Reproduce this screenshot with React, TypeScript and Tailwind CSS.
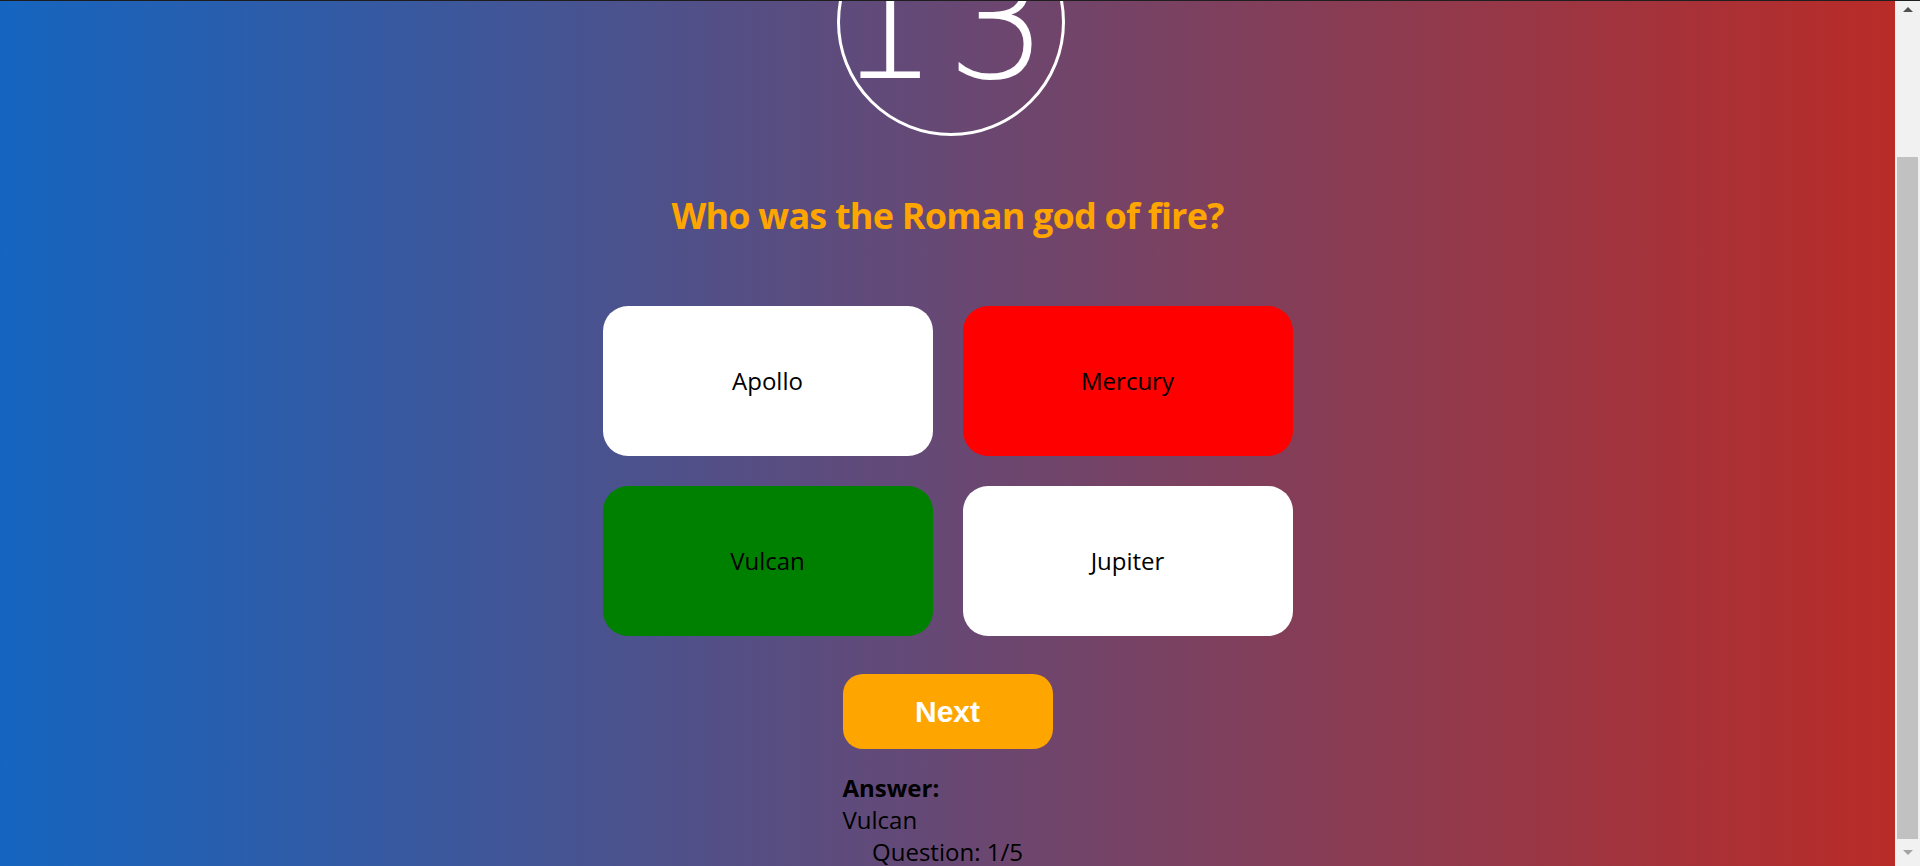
import React from "react";

const options = [
  { label: "Apollo", bg: "bg-white" },
  { label: "Mercury", bg: "bg-[#ff0000]" },
  { label: "Vulcan", bg: "bg-[#008000]" },
  { label: "Jupiter", bg: "bg-white" },
];

export default function App() {
  return (
    <div className="w-[1920px] h-[866px] overflow-hidden flex flex-col">
      <div className="h-px w-full bg-[#1e1e1e] shrink-0" />
      <div className="flex flex-1 min-h-0">
        <main className="flex-1 bg-[linear-gradient(to_right,#1565c0,#b92b27)] flex flex-col items-center overflow-hidden font-['Open_Sans','Noto_Sans',sans-serif]">
          <div className="w-[228px] h-[228px] shrink-0 rounded-full border-[3px] border-white mt-[-93px] ml-[6px] flex items-center justify-center">
            <span className="text-white text-[160px] leading-none font-extralight font-['DejaVu_Sans',sans-serif] tracking-[8px] mt-[2px] mr-[8px]">
              13
            </span>
          </div>
          <h1 className="mt-[56px] h-[48px] leading-[48px] text-[36px] font-bold text-[#ffa500] tracking-[-0.8px]">
            Who was the Roman god of fire?
          </h1>
          <div className="mt-[66px] grid grid-cols-[330px_330px] gap-[30px]">
            {options.map((o) => (
              <button
                key={o.label}
                className={`${o.bg} h-[150px] rounded-[25px] flex items-center justify-center text-[24px] text-black`}
              >
                {o.label}
              </button>
            ))}
          </div>
          <button className="mt-[38px] w-[210px] h-[75px] shrink-0 rounded-[20px] bg-[#ffa500] text-white text-[30px] font-bold font-['Liberation_Sans','Arial',sans-serif] flex items-center justify-center">
            Next
          </button>
          <div className="mt-[23px] w-[210px] text-[24px] leading-[32px] text-black">
            <div className="font-bold">Answer:</div>
            <div>Vulcan</div>
            <div className="text-center">Question: 1/5</div>
          </div>
        </main>
        <div className="w-[25px] shrink-0 bg-[#f1f1f1] flex flex-col items-center">
          <div className="h-[16px] flex items-center justify-center">
            <div className="w-0 h-0 border-l-[5px] border-r-[5px] border-b-[5px] border-l-transparent border-r-transparent border-b-[#505050]" />
          </div>
          <div className="mt-[140px] w-[21px] h-[682px] bg-[#c1c1c1]" />
          <div className="flex-1 flex items-center justify-center">
            <div className="w-0 h-0 border-l-[5px] border-r-[5px] border-t-[5px] border-l-transparent border-r-transparent border-t-[#a3a3a3]" />
          </div>
        </div>
      </div>
    </div>
  );
}
